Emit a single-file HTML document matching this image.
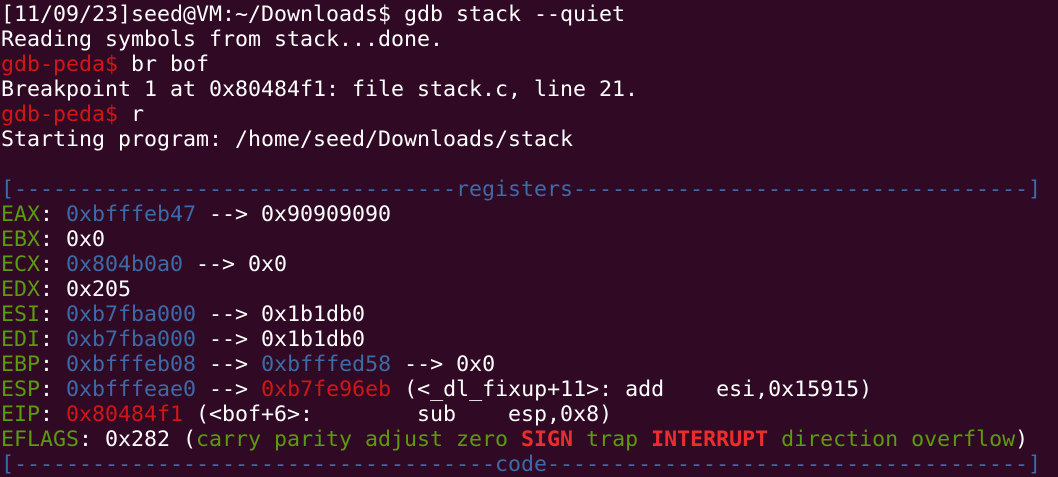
<!DOCTYPE html>
<html><head><meta charset="utf-8"><style>
html,body{margin:0;padding:0;background:#300a24;width:1058px;height:477px;overflow:hidden}
pre{margin:0;padding:2px 0 0 1px;font-family:"DejaVu Sans Mono","Liberation Mono",monospace;font-size:21.6px;line-height:25px;color:#fff;white-space:pre}
.b{color:#3d6aa8}.g{color:#5c9a0e}.r{color:#d01616}.R{color:#ea2d2d;font-weight:bold}
</style></head><body><pre>[11/09/23]seed@VM:~/Downloads$ gdb stack --quiet
Reading symbols from stack...done.
<span class="r">gdb-peda$ </span>br bof
Breakpoint 1 at 0x80484f1: file stack.c, line 21.
<span class="r">gdb-peda$ </span>r
Starting program: /home/seed/Downloads/stack

<span class="b">[----------------------------------registers-----------------------------------]</span>
<span class="g">EAX</span>: <span class="b">0xbfffeb47</span> --&gt; 0x90909090
<span class="g">EBX</span>: 0x0
<span class="g">ECX</span>: <span class="b">0x804b0a0</span> --&gt; 0x0
<span class="g">EDX</span>: 0x205
<span class="g">ESI</span>: <span class="b">0xb7fba000</span> --&gt; 0x1b1db0
<span class="g">EDI</span>: <span class="b">0xb7fba000</span> --&gt; 0x1b1db0
<span class="g">EBP</span>: <span class="b">0xbfffeb08</span> --&gt; <span class="b">0xbfffed58</span> --&gt; 0x0
<span class="g">ESP</span>: <span class="b">0xbfffeae0</span> --&gt; <span class="r">0xb7fe96eb</span> (&lt;_dl_fixup+11&gt;: add    esi,0x15915)
<span class="g">EIP</span>: <span class="r">0x80484f1</span> (&lt;bof+6&gt;:        sub    esp,0x8)
<span class="g">EFLAGS</span>: 0x282 (<span class="g">carry parity adjust zero </span><span class="R">SIGN</span><span class="g"> trap </span><span class="R">INTERRUPT</span><span class="g"> direction overflow</span>)
<span class="b">[-------------------------------------code-------------------------------------]</span>
</pre></body></html>
